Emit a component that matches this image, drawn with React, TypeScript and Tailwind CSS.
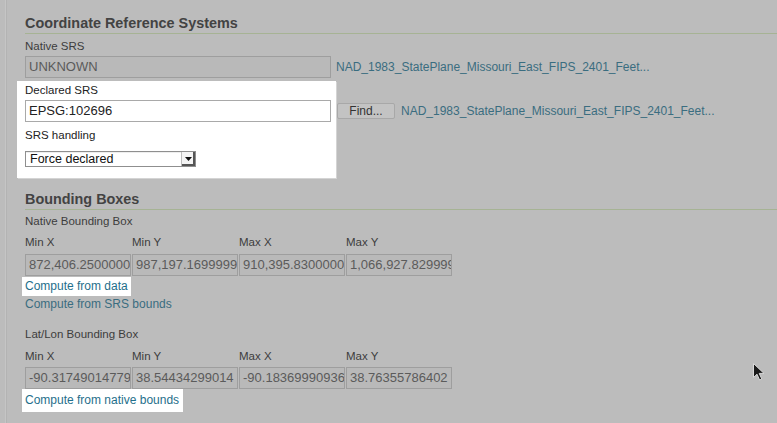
import React from "react";

const font = { fontFamily: '"Liberation Sans", Arial, sans-serif' };

function Heading({ children }: { children: React.ReactNode }) {
  return (
    <div className="border-b border-[#a6b394] pb-px">
      <div className="text-[14.4px] font-bold leading-[17px] text-[#434343]">{children}</div>
    </div>
  );
}

function Field({ value, w = "w-[106px]" }: { value: string; w?: string }) {
  return (
    <div
      className={`${w} h-[22px] shrink-0 overflow-hidden whitespace-nowrap border border-[#9e9e9e] bg-[#b9b9b9] pl-[3px] text-[13px] leading-[20px] text-[#5b5b5b]`}
    >
      {value}
    </div>
  );
}

function BBox({ values, gap }: { values: string[]; gap: string }) {
  const labels = ["Min X", "Min Y", "Max X", "Max Y"];
  return (
    <div>
      <div className="flex gap-px">
        {labels.map((l) => (
          <div key={l} className="w-[106px] text-[11.5px] leading-[14px] text-[#3d3d3d]">
            {l}
          </div>
        ))}
      </div>
      <div className={`${gap} flex gap-px`}>
        {values.map((v) => (
          <Field key={v} value={v} />
        ))}
      </div>
    </div>
  );
}

export default function App() {
  return (
    <div className="relative h-[423px] w-[777px] overflow-hidden bg-[#bcbcbc]" style={font}>
      <div className="absolute left-[5px] top-0 h-full w-px bg-[#c5c5c5]" />
      <div className="absolute left-[6px] top-0 h-full w-px bg-[#b3b3b3]" />

      <div className="pl-[25px] pt-[15px]">
        <Heading>Coordinate Reference Systems</Heading>

        <div className="mt-[5px] text-[11.5px] leading-[14px] text-[#3d3d3d]">Native SRS</div>
        <div className="mt-[3px] flex items-center gap-[5px]">
          <Field value="UNKNOWN" w="w-[306px]" />
          <span className="text-[12px] text-[#3a6d80]">NAD_1983_StatePlane_Missouri_East_FIPS_2401_Feet...</span>
        </div>

        <div className="mt-[3px] flex">
          <div className="-ml-[8px] w-[319px] bg-white pb-[11px] pl-[8px] pt-[2px] shadow-[1px_1px_0_#d4d4d4]">
            <div className="text-[11.5px] leading-[14px] text-[#222]">Declared SRS</div>
            <div className="mt-[3px] h-[22px] w-[306px] border border-[#a9a9a9] pl-[3px] text-[13px] leading-[20px] text-[#222]">
              EPSG:102696
            </div>
            <div className="mt-[6px] text-[11.5px] leading-[14px] text-[#222]">SRS handling</div>
            <div className="mt-[9px] flex h-[16px] w-[171px] items-stretch border border-[#8f8f8f] shadow-[inset_0_1px_0_#eee]">
              <div className="flex-1 pl-[4px] text-[12.5px] leading-[14px] text-[#111]">Force declared</div>
              <div className="flex w-[14px] items-center justify-center border-l border-[#bdbdbd] bg-[#f4f4f4] shadow-[inset_-2px_-2px_0_#555]">
                <svg width="7" height="4" viewBox="0 0 7 4">
                  <path d="M0 0H7L3.5 4Z" fill="#111" />
                </svg>
              </div>
            </div>
          </div>
          <div className="ml-[1px] mt-[19px] flex h-[22px] items-center">
            <div className="flex h-[16px] w-[58px] items-center justify-center rounded-[2px] border border-[#a8a8a8] bg-[#c3c3c3] text-[12px] text-[#333]">
              Find...
            </div>
            <span className="ml-[6px] text-[12px] text-[#3a6d80]">NAD_1983_StatePlane_Missouri_East_FIPS_2401_Feet...</span>
          </div>
        </div>

        <div className="mt-[13px]">
          <Heading>Bounding Boxes</Heading>
        </div>
        <div className="mt-[4px] text-[11.5px] leading-[14px] text-[#3d3d3d]">Native Bounding Box</div>
        <div className="mt-[7px]">
          <BBox gap="mt-[5px]" values={["872,406.2500000000", "987,197.1699999999", "910,395.8300000000", "1,066,927.8299999"]} />
        </div>
        <div className="-ml-[3px] mt-px w-[109px] bg-white pl-[3px] text-[12px] leading-[19px] text-[#1f6f8b]">
          Compute from data
        </div>
        <div className="mt-px text-[12px] leading-[15px] text-[#3a6d80]">Compute from SRS bounds</div>

        <div className="mt-[15px] text-[11.5px] leading-[14px] text-[#3d3d3d]">Lat/Lon Bounding Box</div>
        <div className="mt-[8px]">
          <BBox gap="mt-[4px]" values={["-90.31749014779", "38.54434299014", "-90.18369990936", "38.76355786402"]} />
        </div>
        <div className="-ml-[3px] w-[161px] bg-white pl-[3px] text-[12px] leading-[23px] text-[#1f6f8b]">
          Compute from native bounds
        </div>
      </div>

      <svg className="absolute left-[752px] top-[362px]" width="14" height="20" viewBox="0 0 14 20">
        <path d="M1.5 1.5V15.5L5 12.2L7.6 18L9.8 17L7.2 11.4H12Z" fill="#1a1a1a" stroke="#d8d8d8" strokeWidth="1" />
      </svg>
    </div>
  );
}
